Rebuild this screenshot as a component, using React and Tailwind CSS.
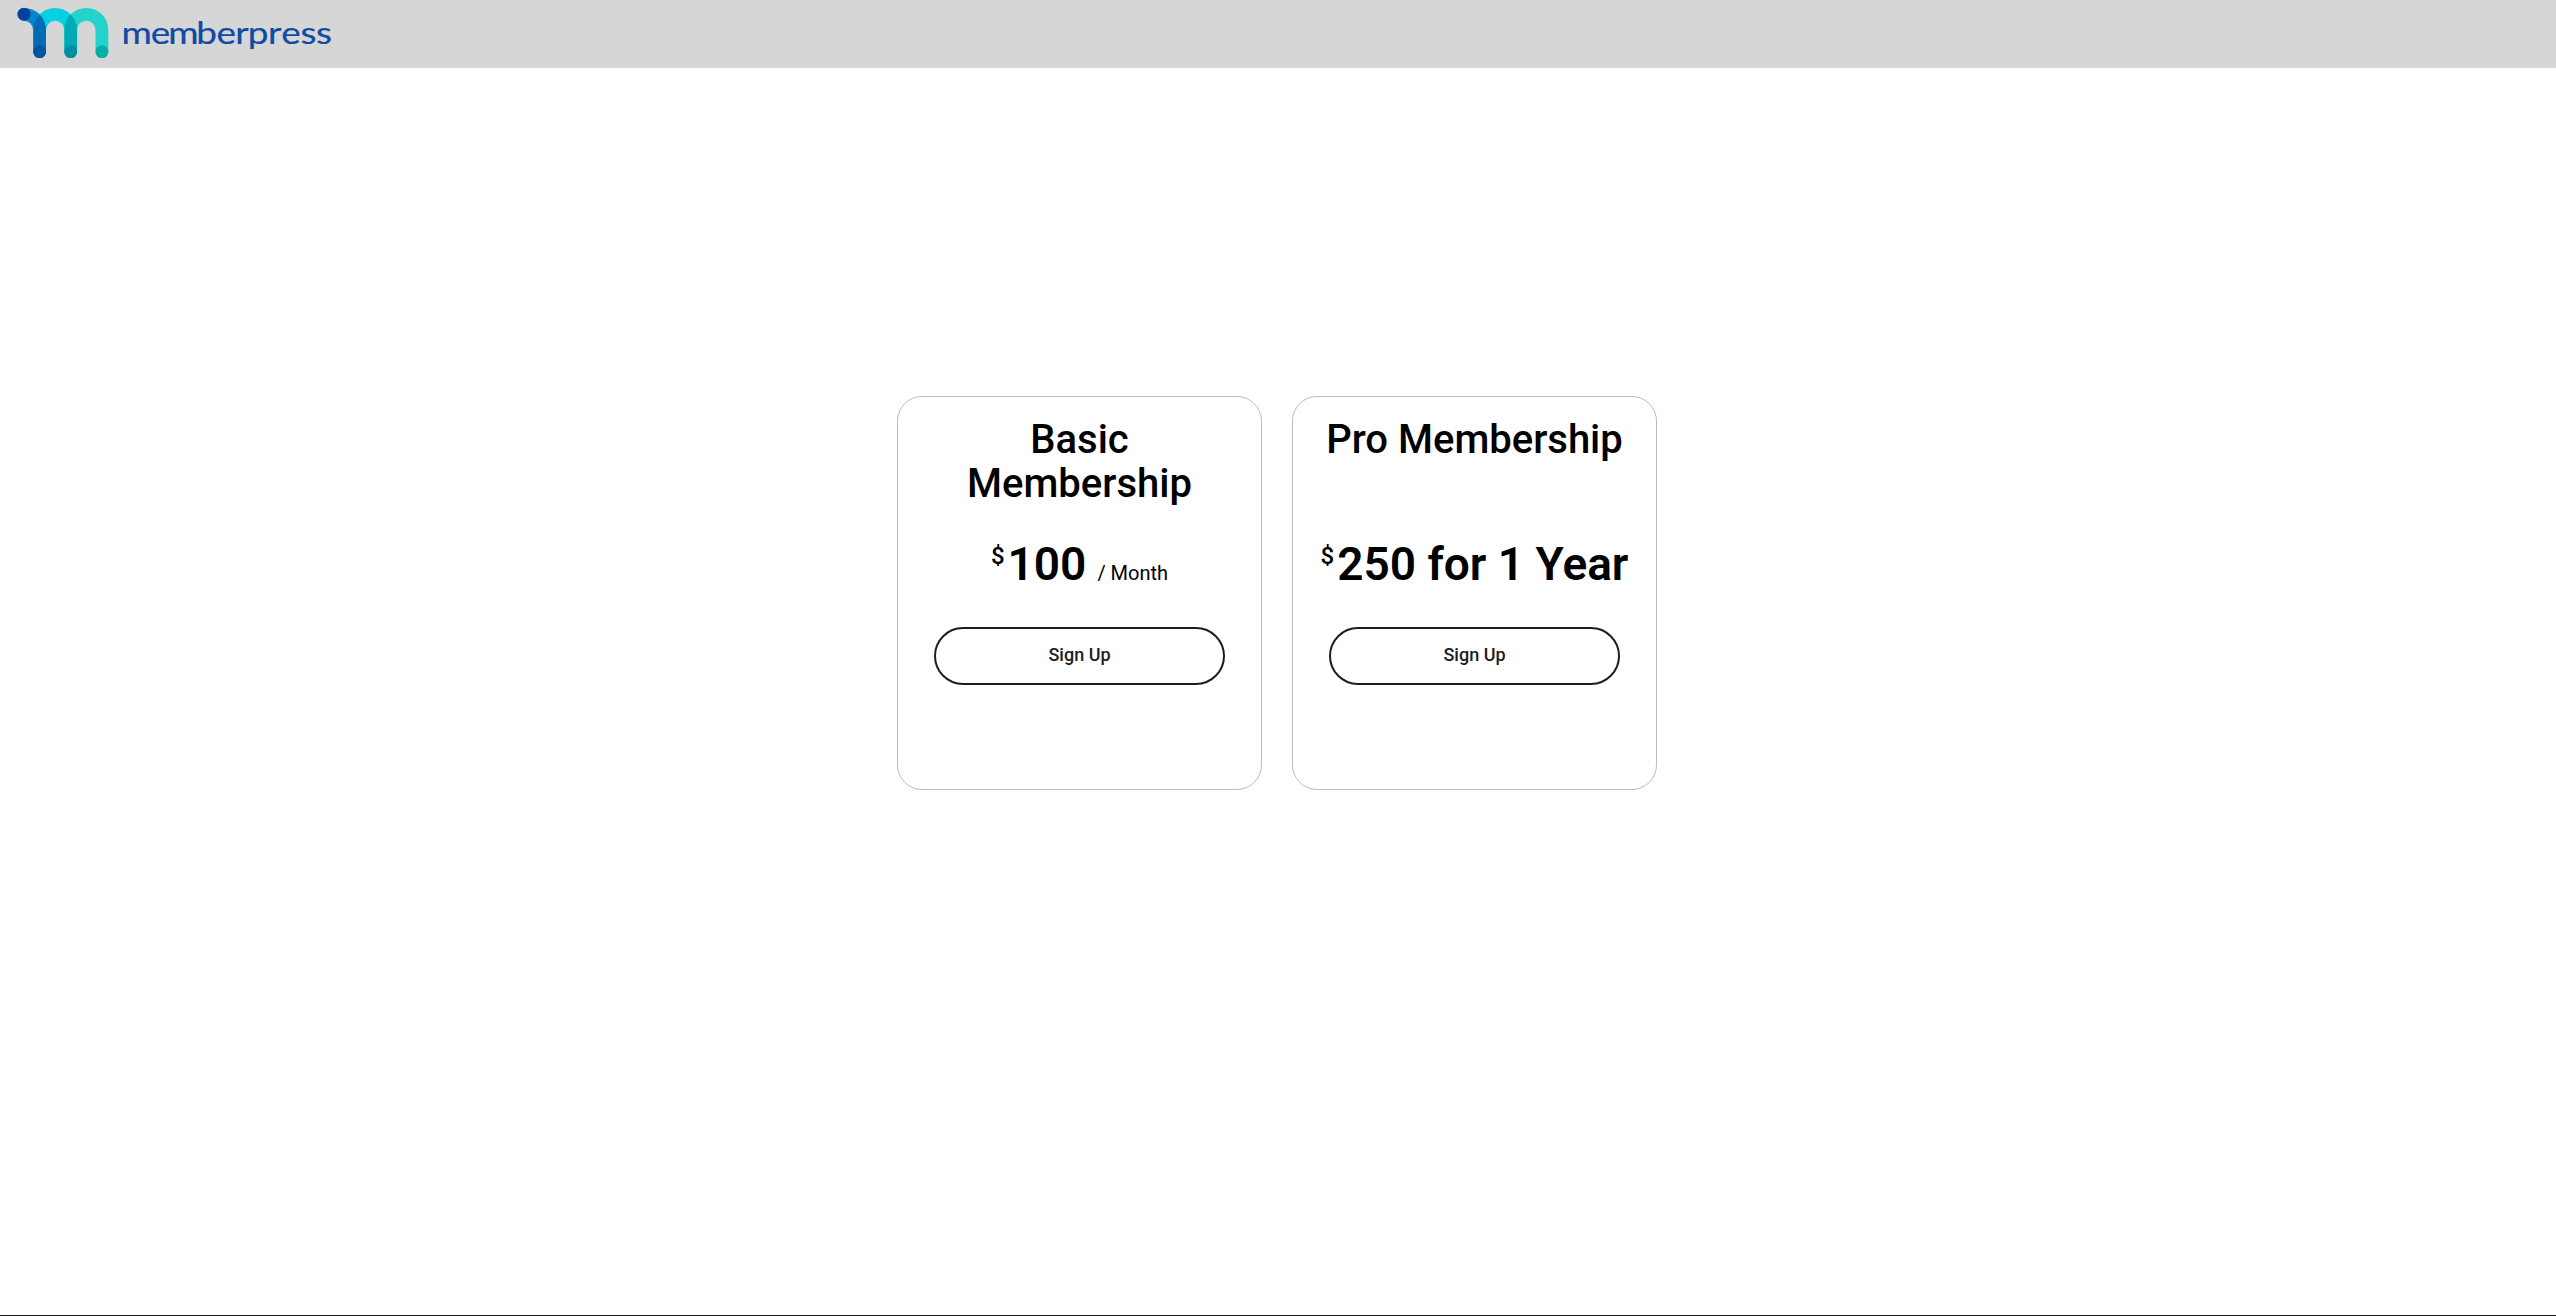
const plans = [
  { id: "basic", name: "Basic Membership", price: "100", period: "/ Month" },
  { id: "pro", name: "Pro Membership", price: "250 for 1 Year" },
];

const Logo = () => (
  <svg className="block h-[68px] w-[340px]" viewBox="0 0 340 68">
    <defs>
      <clipPath id="arch-blue">
        <path d="M24 7.9A22 22 0 0 1 46 29.9V51.6A6.4 6.4 0 0 1 33.2 51.6V29.9A9.2 9.2 0 0 0 24 20.7Z" />
      </clipPath>
      <clipPath id="arch-cyan">
        <path d="M33.2 51.6V29.9A21.9 21.9 0 0 1 77.1 29.9V51.6A6.4 6.4 0 0 1 64.3 51.6V29.9A9.1 9.1 0 0 0 46 29.9V51.6A6.4 6.4 0 0 1 33.2 51.6Z" />
      </clipPath>
    </defs>
    <g fill="none" strokeWidth="12.8" strokeLinecap="round">
      <path d="M24 14.3A15.6 15.6 0 0 1 39.6 29.9V51.6" stroke="#0b84cf" />
      <path d="M39.6 51.6V29.9A15.5 15.5 0 0 1 70.7 29.9V51.6" stroke="#05d1e2" />
      <path d="M70.7 51.6V29.9A15.5 15.5 0 0 1 101.9 29.9V51.6" stroke="#23d4cd" />
      {/* darker areas where neighbouring arches overlap */}
      <path
        d="M39.6 51.6V29.9A15.5 15.5 0 0 1 70.7 29.9"
        stroke="#006cb6"
        clipPath="url(#arch-blue)"
      />
      <path
        d="M70.7 51.6V29.9A15.5 15.5 0 0 1 101.9 29.9"
        stroke="#00aab5"
        clipPath="url(#arch-cyan)"
      />
    </g>
    <circle cx="24" cy="14.2" r="6.5" fill="#04419f" />
    <circle cx="39.6" cy="51.6" r="6.4" fill="#00569d" />
    <circle cx="70.7" cy="51.6" r="6.4" fill="#008f9e" />
    <circle cx="101.9" cy="51.6" r="6.4" fill="#04ada5" />
    <text
      x="102 126.7 141.3 165 181.9 197.8 208.2 225.3 236.3 252.5 265.6"
      y="43.8"
      transform="scale(1.19 1)"
      className="fill-[#0f4aa5] stroke-[#0f4aa5] stroke-[0.2] font-['Lato',sans-serif] text-[31px]"
    >
      memberpress
    </text>
  </svg>
);

const PlanCard = ({ plan }) => (
  <div className="flex h-[394px] w-[365px] flex-col items-center rounded-[25px] border border-[#bbbbbb] pt-[21px]">
    <h2 className="h-[88px] px-6 text-center text-[40px] leading-[44px] font-medium">
      {plan.name}
    </h2>
    <div className="mt-[30px] flex h-14 items-start justify-center whitespace-nowrap">
      <span className="mt-1.5 mr-[3px] text-2xl leading-7 font-medium">$</span>
      <span className="text-[46px] leading-[56px] font-semibold">
        {plan.price}
      </span>
      {plan.period && (
        <span className="ml-[11px] text-xl leading-[74px]">{plan.period}</span>
      )}
    </div>
    <button className="mt-[35px] h-[58px] w-[291px] rounded-full border-2 border-[#1d1d1d] pb-0.5 text-lg font-medium text-[#1d1d1d]">
      Sign Up
    </button>
  </div>
);

const App = () => {
  return (
    <div className="flex h-[1316px] flex-col border-b border-[#1d1d1d] bg-white font-['Roboto',sans-serif] text-black">
      <header className="h-[68px] bg-[#d6d6d6]">
        <Logo />
      </header>

      <main className="flex flex-1 justify-center gap-[30px] pt-[328px] pr-0.5">
        {plans.map((plan) => (
          <PlanCard key={plan.id} plan={plan} />
        ))}
      </main>
    </div>
  );
};

export default App;
